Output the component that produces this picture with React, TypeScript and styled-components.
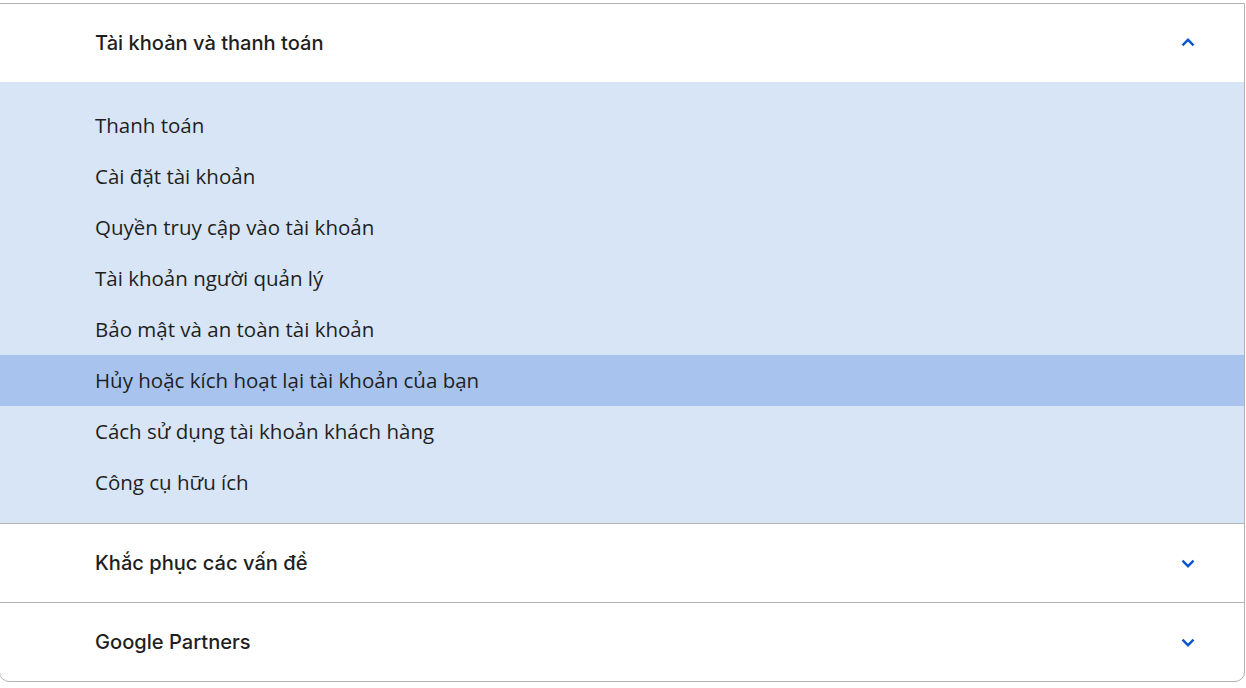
import React, { useState } from 'react';
import styled, { createGlobalStyle } from 'styled-components';

const GlobalStyle = createGlobalStyle`
  html, body {
    margin: 0;
    padding: 0;
    background: #ffffff;
  }
  body {
    font-family: "Open Sans", Roboto, sans-serif;
    color: #1f1f1f;
  }
`;

type Section = {
  title: string;
  items: string[];
};

const sections: Section[] = [
  {
    title: 'Tài khoản và thanh toán',
    items: [
      'Thanh toán',
      'Cài đặt tài khoản',
      'Quyền truy cập vào tài khoản',
      'Tài khoản người quản lý',
      'Bảo mật và an toàn tài khoản',
      'Hủy hoặc kích hoạt lại tài khoản của bạn',
      'Cách sử dụng tài khoản khách hàng',
      'Công cụ hữu ích',
    ],
  },
  { title: 'Khắc phục các vấn đề', items: [] },
  { title: 'Google Partners', items: [] },
];

const Chevron = ({ up }: { up: boolean }) => (
  <ChevronIcon viewBox="0 0 24 24" $up={up}>
    <path d="M6 9.5l6 6 6-6" fill="none" stroke="currentColor" strokeWidth="2.6" />
  </ChevronIcon>
);

export default function App() {
  const [open, setOpen] = useState<number>(0);
  const [hover] = useState<string>('Hủy hoặc kích hoạt lại tài khoản của bạn');

  return (
    <>
      <GlobalStyle />
      <Card>
        {sections.map((s, i) => (
          <Group key={s.title} $last={i === sections.length - 1}>
            <Header onClick={() => setOpen(open === i ? -1 : i)}>
              <HeaderTitle>{s.title}</HeaderTitle>
              <Chevron up={open === i} />
            </Header>
            {open === i && s.items.length > 0 && (
              <Panel>
                {s.items.map((item) => (
                  <Item key={item} $active={item === hover}>
                    {item}
                  </Item>
                ))}
              </Panel>
            )}
          </Group>
        ))}
      </Card>
    </>
  );
}

const Card = styled.div`
  margin: 3px 0 0 -1px;
  width: 1244px;
  border: 1px solid #b3b3b3;
  border-radius: 0 0 10px 10px;
  overflow: hidden;
  background: #fff;
`;

const Group = styled.div<{ $last: boolean }>`
  border-bottom: ${(p) => (p.$last ? 'none' : '1px solid #b3b3b3')};
`;

const Header = styled.div`
  height: 78px;
  box-sizing: border-box;
  display: flex;
  align-items: center;
  justify-content: space-between;
  padding: 0 45px 1px 95px;
  cursor: pointer;
`;

const HeaderTitle = styled.span`
  font-family: Inter, "Open Sans", sans-serif;
  font-size: 20.1px;
  font-weight: 500;
  color: #1f1f1f;
`;

const ChevronIcon = styled.svg<{ $up: boolean }>`
  width: 22px;
  height: 22px;
  color: #0b57d0;
  transform: ${(p) => (p.$up ? 'rotate(180deg)' : 'none')};
`;

const Panel = styled.div`
  background: #d8e5f6;
  padding: 18px 0 15px;
`;

const Item = styled.div<{ $active: boolean }>`
  height: 51px;
  box-sizing: border-box;
  display: flex;
  align-items: center;
  padding: 0 0 2px 95px;
  font-size: 20.5px;
  color: #1f1f1f;
  background: ${(p) => (p.$active ? '#a8c4ee' : 'transparent')};
  cursor: pointer;
`;
